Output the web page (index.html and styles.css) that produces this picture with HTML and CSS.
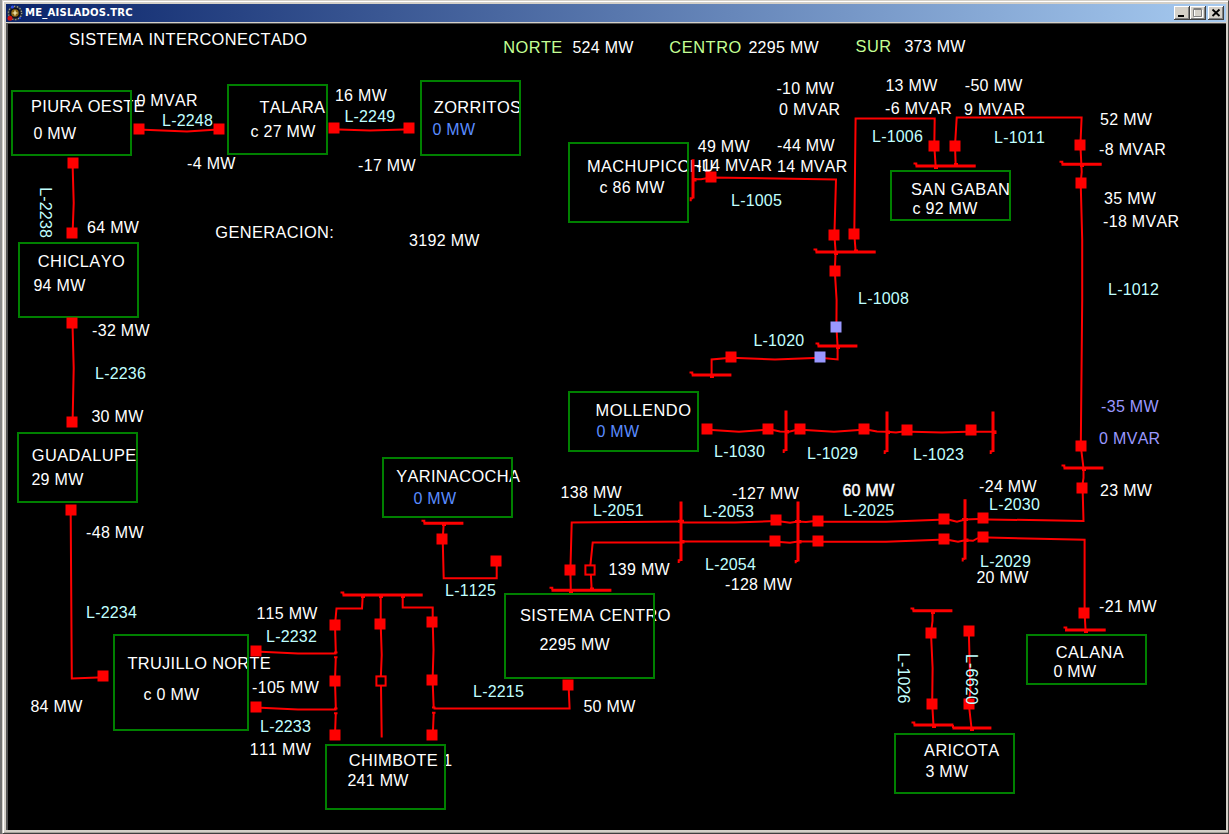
FILE: index.html
```html
<!DOCTYPE html>
<html lang="es">
<head>
<meta charset="utf-8">
<title>ME_AISLADOS.TRC</title>
<link rel="stylesheet" href="styles.css">
</head>
<body>
<div class="window">
  <header class="titlebar">
    <svg class="app-icon" width="16" height="16" viewBox="0 0 16 16">
      <circle class="ring" cx="8" cy="8" r="6.6"/>
      <circle class="ring-dots" cx="8" cy="8" r="6.6"/>
      <circle class="blue" cx="5.5" cy="2" r="1.5"/>
      <circle class="gold" cx="8" cy="8" r="3.8"/>
      <path class="plus" d="M8 5.5v5M5.5 8h5"/>
      <circle class="red" cx="3" cy="13.2" r="2.5"/>
      <circle class="blue" cx="13" cy="13" r="1"/>
    </svg>
    <h1 class="title">ME_AISLADOS.TRC</h1>
    <div class="controls">
      <button class="ctl" aria-label="Minimizar"><svg width="16" height="14"><path class="solid" d="M4 9h6v2H4z"/></svg></button>
      <button class="ctl" aria-label="Maximizar"><svg width="16" height="14"><path class="max-light" d="M4.5 4v7.5h8V4"/><path class="max" d="M3.5 3.5h8v7h-8zM3.5 2.5h8"/></svg></button>
      <button class="ctl close" aria-label="Cerrar"><svg width="16" height="14"><path class="cross" d="M4.5 3.5l7 6.5M11.5 3.5l-7 6.5"/></svg></button>
    </div>
  </header>
  <main class="client">
    <svg class="diagram" width="1218" height="806" viewBox="8 24 1218 806">
      <defs>
        <rect id="s" x="-5.5" y="-5.5" width="11" height="11"/>
        <rect id="o" x="-4.6" y="-4.6" width="9.2" height="9.2"/>
      </defs>
      <g class="name" transform="translate(0 0.5)">
        <text x="69" y="44.3" textLength="238">SISTEMA INTERCONECTADO</text>
        <text x="31" y="111.3" textLength="113.5">PIURA OESTE</text>
        <text x="259.5" y="112.3" textLength="65.5">TALARA</text>
        <text x="433.8" y="112.3" textLength="87.2">ZORRITOS</text>
        <text x="586.9" y="171.3" textLength="126.8">MACHUPICCHU</text>
        <text x="911" y="194.3" textLength="98.8">SAN GABAN</text>
        <text x="37.8" y="266.3" textLength="87">CHICLAYO</text>
        <text x="31.8" y="460.3" textLength="104.5">GUADALUPE</text>
        <text x="127.5" y="668.3" textLength="143.2">TRUJILLO NORTE</text>
        <text x="348.8" y="765.3" textLength="103.2">CHIMBOTE 1</text>
        <text x="396.2" y="481.3" textLength="123.7">YARINACOCHA</text>
        <text x="520" y="620.3" textLength="150.4">SISTEMA CENTRO</text>
        <text x="595.6" y="415.3" textLength="95.3">MOLLENDO</text>
        <text x="1055.8" y="657.3" textLength="68">CALANA</text>
        <text x="924.1" y="755.3" textLength="75">ARICOTA</text>
        <text x="215.3" y="237.3" textLength="118.6">GENERACION:</text>
      </g>
      <g class="station">
        <rect x="12" y="91" width="119" height="64"/>
        <rect x="228" y="85" width="99" height="69"/>
        <rect x="421" y="81" width="99" height="74"/>
        <rect x="569" y="143" width="119" height="79"/>
        <rect x="891" y="171" width="119" height="49"/>
        <rect x="19" y="243" width="119" height="74"/>
        <rect x="18" y="433" width="119" height="69"/>
        <rect x="114" y="635" width="134" height="95"/>
        <rect x="326" y="745" width="119" height="64"/>
        <rect x="383" y="458" width="129" height="59"/>
        <rect x="505" y="594" width="149" height="84"/>
        <rect x="569" y="392" width="129" height="59"/>
        <rect x="1027" y="635" width="119" height="49"/>
        <rect x="895" y="734" width="119" height="59"/>
      </g>
      <g class="line">
        <path d="M144 129.7L187 131.5L214 129.7M339 129.4L370 130.6L404 129.4"/>
        <path d="M72.7 168L73.7 203L72.8 228M72.6 328L73.7 368L72.7 417M70.7 515L71.8 678.5L98 677.6"/>
        <path d="M261 651.7L298 653.4H336.5M261 707.7L298 709.4H336.5"/>
        <path d="M362.7 596L362 608.5H336.5L335 625L335.8 652M335.8 657L335 681L335.8 708M335.8 713L335 735"/>
        <path d="M334 652.5h3.5M334 657.2h3.5M334 708.5h3.5M334 713.2h3.5"/>
        <path d="M380.7 596V624L381.7 655L380.9 676M381 686L381.7 737.5"/>
        <path d="M402.7 596V607.5H432.7V622L433.5 650L432.6 680L433.7 708M433.7 713L432.8 735M432 707.5h3.5M432 712.7h3.5"/>
        <path d="M433.5 708.5H569.6L568.8 690"/>
        <path d="M443.7 524L442.7 539L443.7 578.3H496.7V561"/>
        <path d="M570.8 591L570.4 570L571.7 522.6L681 521.6M591.7 590L590.9 575M590.4 565L592.7 542.6H681"/>
        <path d="M681 522.4H735L776 521M681 541.4H775"/>
        <path d="M781 521.5L790 522.8L798 521.6L806 522L813 521.2M780 542L790 542.8L798 541.6H818"/>
        <path d="M823 521.7H886L939 519.7M823 541.7H886L939 539.7"/>
        <path d="M949 519.7L957 521.7L965 519.5L978 519M949 540L958 541.8L965 540.2L973 540.8L978 538"/>
        <path d="M988 519.4L1083.5 521L1082.6 488M988 537.6L1084.6 539.8V613L1085.6 631"/>
        <path d="M1082 488L1083.5 478V468L1080.8 446L1082.2 300V240L1080.7 183L1081.7 172L1080.4 145L1081.6 117.5H956.7L955 146L955.7 166"/>
        <path d="M935.7 167L934.3 146L934.7 118.6H855.6L854.3 234L855.6 251"/>
        <path d="M694 179.3H701L711 177.6L836 179.4L834.4 235L835.6 252L834.8 271L836.6 300L836.4 327L837.6 346V359.5L820 357.7L775 359.5L731 357.7L711.6 359.5V377"/>
        <path d="M712 430L739 431.7L763 430M773 430L780 431.5L789 431.7L796 430M805 430L834 431.7L859 430M869 430L877 431.6L887 431.8L896 432.5L903 431.6M912 431.8L942 432.6L966 431.7H996"/>
        <path d="M932.5 611V621L931 633L932.6 668L932.2 704L933.6 727M968.8 631L970.4 690L968.8 704L971.6 729"/>
      </g>
      <g class="bus">
        <path d="M342.5 595H422.7M423.5 523.2H463.4M551.5 590.2H611.4M693 159.3V198.5M815.5 252H875.7M915.5 166H975.7M1061.5 164.2H1101.7M1063.5 468H1103.4M817.5 346H857.4M691.7 375H731.4M1065 630H1105.7M912.5 610.8H952.4M913.5 725H953.4M952.5 728H991.4"/>
        <path d="M786 410.5V451M887 411.5V452M993 411.5V452M681 501.5V561M798 501.5V561.5M965 499.3V559.5"/>
      </g>
      <g class="hook">
        <path d="M340.5 592.6h2.8v2M421.5 520.8h2.8v2M549.5 587.8h2.8v2M813.5 249.6h2.8v2M913.5 163.6h2.8v2M1059.5 161.8h2.8v2M1061.5 465.6h2.8v2M815.5 343.6h2.8v2M689.5 372.6h2.8v2M1063.5 627.6h2.8v2M910.5 608.4h2.8v2M911.5 722.6h2.8v2M953 725v3"/>
        <path d="M693 198.3h-2.3v3M786 450.3h-2.3v2.8M887 451.3h-2.3v2.8M993 451.3h-2.3v2.8M681 560.3h-2.3v2.8M798 561h-2.3v2.3M965 558.8h-2.3v2.8"/>
      </g>
      <g class="node">
        <path d="M361 595h4v3h-4zM379 595h4v3h-4zM401 595h4v3h-4zM442 523h4v3h-4zM569 590h4v3h-4zM590 587.5h4v3h-4zM834 252h4v3h-4zM854 249.5h4v3h-4zM934 166h4v3h-4zM954 163h4v3h-4zM1080 164h4v3h-4zM1082 468h4v3h-4zM836 346h4v3h-4zM710 375h4v3h-4zM1084 630h4v3h-4zM931 611h4v3h-4zM932 725h4v3h-4zM970 728h4v3h-4z"/>
        <path d="M678 519.8h6v3h-6zM681 540h3.5v3.5H681zM795 520h6v3h-6zM798 540h3.5v3.5H798zM962 518h6v3h-6zM965 538.5h3.5v3.5H965zM693 178h3.5v3.5H693zM786 430h3v3.5h-3zM887 430.5h3v3.5h-3zM993 430.5h3.5v3.5H993z"/>
      </g>
      <g class="switch">
        <use href="#s" x="139" y="129"/><use href="#s" x="219" y="129"/><use href="#s" x="334" y="128"/><use href="#s" x="409" y="128"/>
        <use href="#s" x="73" y="163"/><use href="#s" x="72" y="233"/><use href="#s" x="72" y="323"/><use href="#s" x="72" y="422"/>
        <use href="#s" x="71" y="510"/><use href="#s" x="103" y="676"/><use href="#s" x="256" y="651"/><use href="#s" x="256" y="707"/>
        <use href="#s" x="335" y="625"/><use href="#s" x="335" y="681"/><use href="#s" x="335" y="735"/><use href="#s" x="380" y="624"/>
        <use href="#s" x="432" y="622"/><use href="#s" x="432" y="680"/><use href="#s" x="432" y="735"/>
        <use href="#s" x="442" y="539"/><use href="#s" x="496" y="561"/><use href="#s" x="570" y="570"/><use href="#s" x="568" y="685"/>
        <use href="#s" x="776" y="520"/><use href="#s" x="775" y="541"/><use href="#s" x="818" y="521"/><use href="#s" x="818" y="541"/>
        <use href="#s" x="944" y="519"/><use href="#s" x="944" y="539"/><use href="#s" x="983" y="518"/><use href="#s" x="983" y="537"/>
        <use href="#s" x="1082" y="488"/><use href="#s" x="1081" y="446"/><use href="#s" x="1084" y="613"/><use href="#s" x="1080" y="145"/><use href="#s" x="1081" y="183"/>
        <use href="#s" x="934" y="146"/><use href="#s" x="955" y="146"/><use href="#s" x="711" y="177"/><use href="#s" x="834" y="235"/><use href="#s" x="854" y="234"/><use href="#s" x="835" y="271"/>
        <use href="#s" x="731" y="357"/><use href="#s" x="707" y="429"/><use href="#s" x="768" y="429"/><use href="#s" x="800" y="429"/><use href="#s" x="864" y="429"/><use href="#s" x="907" y="430"/><use href="#s" x="971" y="430"/>
        <use href="#s" x="931" y="633"/><use href="#s" x="969" y="631"/><use href="#s" x="932" y="704"/><use href="#s" x="969" y="704"/>
      </g>
      <g class="switch unknown"><use href="#s" x="836" y="327"/><use href="#s" x="820" y="357"/></g>
      <g class="switch open"><use href="#o" x="381" y="681"/><use href="#o" x="590" y="570"/></g>
      <g class="area" transform="translate(0.5 0.5)">
        <text x="502.8" y="52.3" textLength="59">NORTE</text>
        <text x="668.8" y="52.3" textLength="72">CENTRO</text>
        <text x="855" y="51.3" textLength="35.5">SUR</text>
      </g>
      <g class="value" transform="translate(0.4 0.5)">
        <text x="572" y="52.3">524 MW</text><text x="748" y="52.3">2295 MW</text><text x="904" y="51.3">373 MW</text>
        <text x="33" y="138.3">0 MW</text><text x="136" y="105.3">0 MVAR</text><text x="250" y="136.3">c 27 MW</text>
        <text x="186.7" y="168.3">-4 MW</text><text x="86.7" y="232.3">64 MW</text><text x="334.5" y="100.3">16 MW</text>
        <text x="357.7" y="170.3">-17 MW</text><text x="408.7" y="245.3">3192 MW</text><text x="599" y="192.3">c 86 MW</text>
        <text x="776" y="93.3">-10 MW</text><text x="778.7" y="114.3">0 MVAR</text><text x="697.3" y="151.3">49 MW</text>
        <text x="776.7" y="150.3">-44 MW</text><text x="695.8" y="170.3">-14 MVAR</text><text x="776.7" y="171.3">14 MVAR</text>
        <text x="885" y="90.3">13 MW</text><text x="884.7" y="113.3">-6 MVAR</text><text x="964.4" y="90.3">-50 MW</text><text x="963.6" y="114.3">9 MVAR</text>
        <text x="1099.7" y="124.3">52 MW</text><text x="1098.7" y="154.3">-8 MVAR</text><text x="1103.7" y="203.3">35 MW</text><text x="1102.7" y="226.3">-18 MVAR</text>
        <text x="912" y="213.3">c 92 MW</text><text x="33" y="290.3">94 MW</text><text x="91.7" y="335.3">-32 MW</text><text x="91" y="421.3">30 MW</text>
        <text x="31" y="484.3">29 MW</text><text x="85.7" y="537.3">-48 MW</text><text x="30" y="711.3">84 MW</text><text x="143" y="699.3">c 0 MW</text>
        <text x="256" y="618.3">115 MW</text><text x="251.7" y="692.3">-105 MW</text><text x="249.3" y="754.3">111 MW</text><text x="347" y="785.3">241 MW</text>
        <text x="560.2" y="497.3">138 MW</text><text x="608.2" y="574.3">139 MW</text><text x="539" y="649.3">2295 MW</text><text x="583" y="711.3">50 MW</text>
        <text x="731.7" y="498.3">-127 MW</text><text x="842" y="495.3" class="double">60 MW</text><text x="724.7" y="589.3">-128 MW</text>
        <text x="978.7" y="491.3">-24 MW</text><text x="976" y="582.3">20 MW</text><text x="1099.7" y="495.3">23 MW</text><text x="1098.7" y="611.3">-21 MW</text>
        <text x="1053" y="676.3">0 MW</text><text x="925" y="776.3">3 MW</text>
      </g>
      <g class="value idle" transform="translate(0.4 0.5)">
        <text x="432" y="134.3">0 MW</text><text x="413" y="503.3">0 MW</text><text x="596" y="436.3">0 MW</text>
      </g>
      <g class="value stale" transform="translate(0.4 0.5)">
        <text x="1100.7" y="411.3">-35 MW</text><text x="1098.7" y="443.3">0 MVAR</text>
      </g>
      <g class="tag" transform="translate(0.6 0.5)">
        <text x="161.5" y="125.3">L-2248</text><text x="343.8" y="121.3">L-2249</text><text x="730.5" y="205.3">L-1005</text>
        <text x="871.5" y="141.3">L-1006</text><text x="993.5" y="142.3">L-1011</text><text x="1107.5" y="294.3">L-1012</text><text x="857.5" y="303.3">L-1008</text>
        <text x="94.5" y="378.3">L-2236</text><text x="85.5" y="617.3">L-2234</text><text x="265.5" y="641.3">L-2232</text><text x="259.5" y="731.3">L-2233</text>
        <text x="444.5" y="595.3">L-1125</text><text x="472.5" y="696.3">L-2215</text><text x="592.3" y="515.3">L-2051</text><text x="752.8" y="345.3">L-1020</text>
        <text x="713.5" y="456.3">L-1030</text><text x="806.5" y="458.3">L-1029</text><text x="912.5" y="459.3">L-1023</text><text x="702.5" y="516.3">L-2053</text>
        <text x="842.8" y="515.3">L-2025</text><text x="704.5" y="569.3">L-2054</text><text x="988.5" y="509.3">L-2030</text><text x="979.5" y="566.3">L-2029</text>
        <text transform="translate(38.9 186.7) rotate(90)">L-2238</text>
        <text transform="translate(897.8 652.3) rotate(90)">L-1026</text>
        <text transform="translate(965.2 653.5) rotate(90)">L-6620</text>
      </g>
    </svg>
  </main>
</div>
</body>
</html>
```
FILE: styles.css
```css
* { box-sizing: border-box; }
body {
  margin: 0;
  width: 1229px;
  height: 834px;
  padding-left: 2px;
  overflow: hidden;
  background: linear-gradient(#9a9a9a, #6e6e6e);
}
.window {
  display: flex;
  flex-direction: column;
  width: 1227px;
  height: 834px;
  padding: 2px 2px 3px 2px;
  background: #d4d0c8;
  border: 1px solid #d4d0c8;
  border-right-color: #504c48;
  border-bottom-color: #404040;
  box-shadow: inset 1px 1px 0 #fff, inset 0 -1px 0 #a8a49c;
}
.titlebar {
  display: flex;
  align-items: center;
  flex: none;
  height: 18px;
  margin: 1px 0 1px 1px;
  padding: 0 2px 0 1px;
  background: linear-gradient(90deg, #0a246a, #a6caf0);
}
.app-icon { display: block; flex: none; }
.ring { fill: #0c1020; stroke: #303848; stroke-width: 2; }
.ring-dots { fill: none; stroke: #a8a890; stroke-width: 1.4; stroke-dasharray: 1 2; }
.blue { fill: #2848f0; }
.gold { fill: #8a6410; }
.red { fill: #d01010; }
.plus { stroke: #fff8c0; stroke-width: 1.2; }
.title {
  margin: 0 auto 0 2px;
  font: bold 11.2px/18px "DejaVu Sans Condensed", "DejaVu Sans", sans-serif;
  font-stretch: condensed;
  letter-spacing: 0.2px;
  color: #fff;
  white-space: nowrap;
}
.controls { display: flex; }
.ctl {
  width: 16px;
  height: 14px;
  padding: 0;
  border: 0;
  background: #d4d0c8;
  box-shadow: inset -1px -1px 0 #404040, inset 1px 1px 0 #fff, inset -2px -2px 0 #808080;
}
.ctl svg { display: block; }
.close { margin-left: 2px; }
.solid { fill: #000; }
.max { fill: none; stroke: #808080; }
.max-light { fill: none; stroke: #fff; }
.cross { fill: none; stroke: #000; stroke-width: 1.8; }
.client {
  flex: 1;
  margin-left: 1px;
  border: solid #505050;
  border-width: 1px 0 0 2px;
  background: #000;
  overflow: hidden;
}
.diagram {
  display: block;
  font: 16px "Liberation Sans", Arial, sans-serif;
  font-kerning: none;
}
.name, .value { fill: #fff; }
.value { letter-spacing: 0.3px; }
.name { font-size: 16.4px; }
.area { fill: #c4ff94; font-size: 16.4px; }
.tag { fill: #c0ffff; letter-spacing: 0.18px; }
.idle { fill: #5a8cff; }
.stale { fill: #9a98ff; }
.double { stroke: #fff; stroke-width: 0.4; }
.station { fill: none; stroke: #008000; stroke-width: 2; }
.line, .bus, .hook { fill: none; stroke: #f00; stroke-width: 2; }
.bus { stroke-width: 3; }
.node, .switch { fill: #f00; }
.unknown { fill: #9a98ff; }
.open { fill: #000; stroke: #f00; stroke-width: 2; }
```
